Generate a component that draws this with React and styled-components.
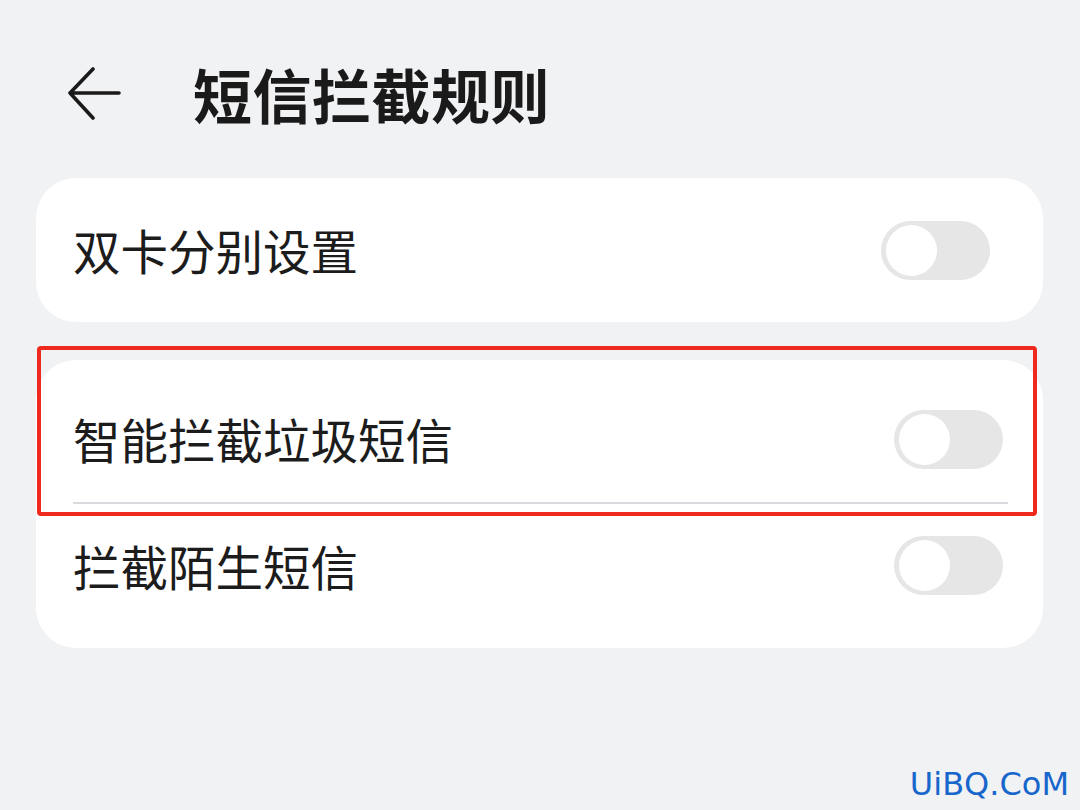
import React from "react";
import styled, { createGlobalStyle } from "styled-components";

const GlobalStyle = createGlobalStyle`
  html, body {
    margin: 0;
    padding: 0;
    background: #f1f2f4;
  }
  * {
    box-sizing: border-box;
  }
`;

const Page = styled.div`
  position: relative;
  width: 1080px;
  height: 810px;
  overflow: hidden;
  background: #f1f2f4;
  font-family: "Noto Sans CJK SC", "Noto Sans", sans-serif;
  color: #1c1c1c;
`;

const Header = styled.div`
  display: flex;
  align-items: center;
  height: 150px;
  margin-top: 20px;
  padding-left: 68px;
`;

const BackButton = styled.div`
  display: flex;
  width: 54px;
  height: 56px;
  margin-right: 71px;
  margin-top: -2px;
`;

const Title = styled.h1`
  margin: -4px 0 0;
  font-size: 59px;
  font-weight: 700;
  line-height: 1;
  letter-spacing: 0.5px;
  color: #1a1a1a;
`;

const Main = styled.div`
  display: flex;
  flex-direction: column;
  gap: 38px;
  padding: 8px 37px 0 36px;
`;

const Card = styled.div`
  background: #ffffff;
  border-radius: 40px;
  padding-right: ${(p) => p.$padRight}px;
`;

const Row = styled.div`
  display: flex;
  align-items: center;
  justify-content: space-between;
  height: ${(p) => p.$height}px;
  padding-left: 37px;
  padding-top: ${(p) => p.$top || 0}px;
  padding-bottom: ${(p) => p.$bottom || 0}px;
`;

const Label = styled.span`
  font-size: 47.5px;
  font-weight: 400;
  line-height: 1;
  color: #1c1c1c;
`;

const Divider = styled.div`
  height: 1.5px;
  margin: 0 -5px 0 37px;
  background: #d9d9de;
`;

const Track = styled.div`
  position: relative;
  flex: none;
  width: 109px;
  height: 59px;
  border-radius: 30px;
  background: #e6e6e6;
`;

const Knob = styled.div`
  position: absolute;
  top: 4px;
  left: 5px;
  width: 51px;
  height: 51px;
  border-radius: 50%;
  background: #ffffff;
`;

const Highlight = styled.div`
  position: absolute;
  left: 37px;
  top: 346px;
  width: 1000px;
  height: 170px;
  border: 4.5px solid #ee2a1f;
  border-radius: 4px;
  pointer-events: none;
`;

const Watermark = styled.div`
  position: absolute;
  right: 11px;
  bottom: 10px;
  font-family: "DejaVu Sans", "Liberation Sans", sans-serif;
  font-size: 32px;
  line-height: 32px;
  color: #1766cc;
`;

const Toggle = () => (
  <Track>
    <Knob />
  </Track>
);

const BackArrow = () => (
  <svg width="54" height="56" viewBox="0 0 54 56" fill="none">
    <path
      d="M25 3 L2 27 L25 52 M2 27 L51 27"
      stroke="#1a1a1a"
      strokeWidth="3.6"
      strokeLinecap="round"
      strokeLinejoin="round"
    />
  </svg>
);

const App = () => {
  return (
    <Page>
      <GlobalStyle />
      <Header>
        <BackButton>
          <BackArrow />
        </BackButton>
        <Title>短信拦截规则</Title>
      </Header>

      <Main>
        <Card $padRight={53}>
          <Row $height={144}>
            <Label>双卡分别设置</Label>
            <Toggle />
          </Row>
        </Card>

        <Card $padRight={40}>
          <Row $height={142} $top={16}>
            <Label>智能拦截垃圾短信</Label>
            <Toggle />
          </Row>
          <Divider />
          <Row $height={144} $bottom={20}>
            <Label>拦截陌生短信</Label>
            <Toggle />
          </Row>
        </Card>
      </Main>

      <Highlight />
      <Watermark>UiBQ.CoM</Watermark>
    </Page>
  );
};

export default App;
